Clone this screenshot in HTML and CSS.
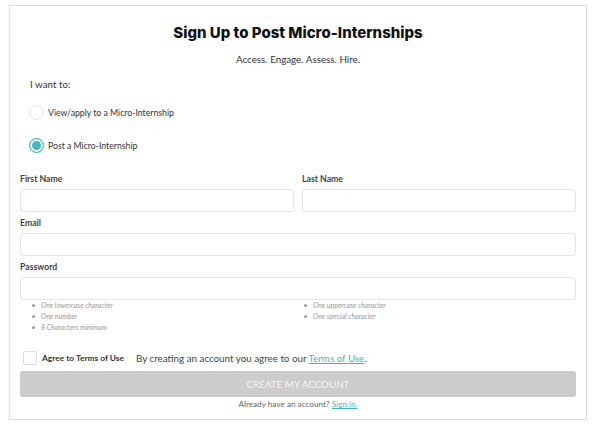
FILE: index.html
```html
<!DOCTYPE html>
<html lang="en">
<head>
    <meta charset="UTF-8" />
    <title>Sign Up to Post Micro-Internships</title>
    <link rel="stylesheet" href="styles.css">
</head>
<body>
<div class="card">
    <h1>Sign Up to Post Micro-Internships</h1>
    <p class="subtitle">Access. Engage. Assess. Hire.</p>

    <p class="want">I want to:</p>
    <label class="radio-row">
        <span class="radio"></span>
        View/apply to a Micro-Internship
    </label>
    <label class="radio-row radio-row-last">
        <span class="radio checked"></span>
        Post a Micro-Internship
    </label>

    <form class="signup-form">
        <div class="row-two">
            <div class="field">
                <label for="firstName">First Name</label>
                <input type="text" id="firstName" />
            </div>
            <div class="field">
                <label for="lastName">Last Name</label>
                <input type="text" id="lastName" />
            </div>
        </div>
        <div class="field">
            <label for="email">Email</label>
            <input type="text" id="email" />
        </div>
        <div class="field">
            <label for="password">Password</label>
            <input type="password" id="password" />
        </div>

        <div class="hints">
            <ul class="hints-left">
                <li>One lowercase character</li>
                <li>One number</li>
                <li>8 Characters minimum</li>
            </ul>
            <ul class="hints-right">
                <li>One uppercase character</li>
                <li>One special character</li>
            </ul>
        </div>

        <div class="terms-row">
            <span class="checkbox"></span>
            <span class="terms-label">Agree to Terms of Use</span>
            <span class="terms-text">By creating an account you agree to our <a href="#">Terms of Use</a>.</span>
        </div>

        <button type="submit" class="create-button">CREATE MY ACCOUNT</button>
        <p class="signin">Already have an account? <a href="#">Sign in.</a></p>
    </form>
</div>
</body>
</html>
```

FILE: styles.css
```css
* {
    box-sizing: border-box;
}

body {
    margin: 0;
    padding: 0;
    background-color: #ffffff;
    color: #333333;
    font-family: 'Lato', 'Liberation Sans', sans-serif;
}

.card {
    width: 578px;
    margin: 5px 0 0 9px;
    padding: 0 10px 9px 10px;
    border: 1px solid #dcdcdc;
    box-shadow: 0 1px 2px rgba(0, 0, 0, 0.06);
}

h1 {
    margin: 17px 0 0 0;
    font-family: 'Inter', sans-serif;
    font-weight: 800;
    font-size: 15px;
    line-height: 20px;
    text-align: center;
    color: #111111;
}

.subtitle {
    margin: 9px 0 0 0;
    font-size: 9.8px;
    line-height: 14px;
    text-align: center;
    color: #333333;
}

.want {
    margin: 11px 0 0 10px;
    font-size: 9.8px;
    line-height: 14px;
    color: #333333;
}

.radio-row {
    display: flex;
    align-items: center;
    gap: 4px;
    height: 20px;
    margin: 11px 0 0 9px;
    font-size: 8.7px;
    color: #333333;
}

.radio-row-last {
    margin-top: 13px;
}

.radio {
    width: 15px;
    height: 15px;
    border: 1px solid #e2e2e2;
    border-radius: 50%;
    background-color: #ffffff;
}

.radio.checked {
    border: 1px solid #45b5c1;
    background-color: #45b5c1;
    box-shadow: inset 0 0 0 2px #ffffff;
}

.signup-form {
    margin-top: 18px;
}

.row-two {
    display: grid;
    grid-template-columns: 1fr 1fr;
    gap: 8px;
}

.field {
    display: flex;
    flex-direction: column;
    margin-bottom: 5px;
}

.field label {
    font-size: 8.7px;
    line-height: 12px;
    font-weight: 700;
    color: #444444;
    margin-bottom: 4px;
}

.field input {
    width: 100%;
    height: 23px;
    border: 1px solid #e4e4e4;
    border-radius: 3px;
    background-color: #ffffff;
    font-family: inherit;
}

.hints {
    display: grid;
    grid-template-columns: 1fr 1fr;
    margin-top: -5px;
}

.hints ul {
    list-style: none;
    margin: 0;
    padding: 0 0 0 21px;
}

.hints-right {
    padding-left: 15px !important;
}

.hints li {
    position: relative;
    font-size: 7px;
    line-height: 11px;
    font-style: italic;
    color: #9a9a9a;
}

.hints li::before {
    content: '';
    position: absolute;
    left: -9px;
    top: 4px;
    width: 3px;
    height: 3px;
    border-radius: 50%;
    background-color: #9a9a9a;
}

.terms-row {
    display: flex;
    align-items: center;
    height: 16px;
    margin: 17px 0 0 3px;
}

.checkbox {
    width: 14px;
    height: 14px;
    border: 1px solid #dddddd;
    border-radius: 2px;
}

.terms-label {
    margin-left: 5px;
    font-size: 8.4px;
    font-weight: 700;
    color: #333333;
}

.terms-text {
    margin-left: 12px;
    font-size: 9.8px;
    color: #444444;
}

.terms-text a, .signin a {
    color: #45b5c1;
}

.create-button {
    display: block;
    width: 100%;
    height: 26px;
    margin-top: 5px;
    border: none;
    border-radius: 3px;
    background-color: #cccccc;
    color: #f4f4f4;
    font-family: inherit;
    font-size: 9.8px;
    cursor: pointer;
}

.signin {
    margin: 1px 0 0 0;
    font-size: 8.2px;
    line-height: 12px;
    text-align: center;
    color: #666666;
}
```
